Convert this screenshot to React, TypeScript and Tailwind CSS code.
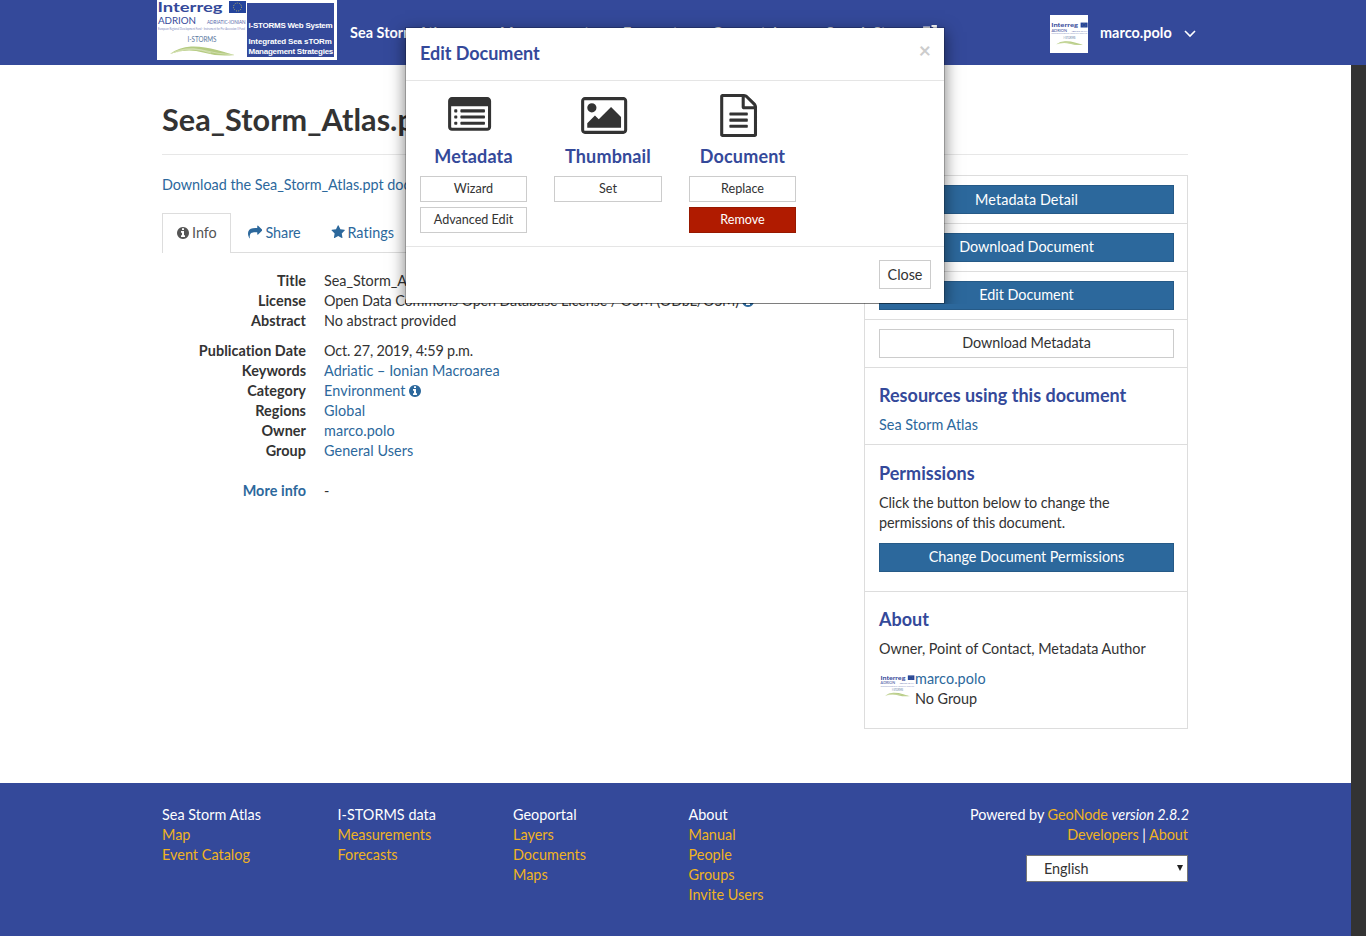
import React from "react";

const FILE =
  "M1596 380q28 28 48 76t20 88v1152q0 40-28 68t-68 28h-1344q-40 0-68-28t-28-68v-1600q0-40 28-68t68-28h896q40 0 88 20t76 48zm-444-244v376h376q-10-29-22-41l-313-313q-12-12-41-22zm384 1528v-1024h-416q-40 0-68-28t-28-68v-416h-768v1536h1280zm-1024-864q0-14 9-23t23-9h704q14 0 23 9t9 23v64q0 14-9 23t-23 9h-704q-14 0-23-9t-9-23v-64zm736 224q14 0 23 9t9 23v64q0 14-9 23t-23 9h-704q-14 0-23-9t-9-23v-64q0-14 9-23t23-9h704zm0 256q14 0 23 9t9 23v64q0 14-9 23t-23 9h-704q-14 0-23-9t-9-23v-64q0-14 9-23t23-9h704z";
const PICTURE =
  "M640 576q0 80-56 136t-136 56-136-56-56-136 56-136 136-56 136 56 56 136zm1024 384v448h-1408v-192l320-320 160 160 512-512zm96-704h-1600q-13 0-22.5 9.5t-9.5 22.5v1216q0 13 9.5 22.5t22.5 9.5h1600q13 0 22.5-9.5t9.5-22.5v-1216q0-13-9.5-22.5t-22.5-9.5zm160 32v1216q0 66-47 113t-113 47h-1600q-66 0-113-47t-47-113v-1216q0-66 47-113t113-47h1600q66 0 113 47t47 113z";
const INFO =
  "M1152 1376v-160q0-14-9-23t-23-9h-96v-512q0-14-9-23t-23-9h-320q-14 0-23 9t-9 23v160q0 14 9 23t23 9h96v320h-96q-14 0-23 9t-9 23v160q0 14 9 23t23 9h448q14 0 23-9t9-23zm-128-896v-160q0-14-9-23t-23-9h-192q-14 0-23 9t-9 23v160q0 14 9 23t23 9h192q14 0 23-9t9-23zm640 416q0 209-103 385.5t-279.5 279.5-385.5 103-385.5-103-279.5-279.5-103-385.5 103-385.5 279.5-279.5 385.5-103 385.5 103 279.5 279.5 103 385.5z";
const SHARE =
  "M1792 640q0 26-19 45l-512 512q-19 19-45 19t-45-19-19-45v-256h-224q-98 0-175.5 6t-154 21.5-133 42.5-105.5 69.5-80 101-48.5 138.5-17.5 181q0 55 5 123 0 6 2.5 23.5t2.5 26.5q0 15-8.5 25t-23.5 10q-16 0-28-17-7-9-13-22t-13.5-30-10.5-24q-127-285-127-451 0-199 53-333 162-403 875-403h224v-256q0-26 19-45t45-19 45 19l512 512q19 19 19 45z";
const STAR =
  "M1728 647q0 22-26 48l-363 354 86 500q1 7 1 20 0 21-10.5 35.5t-30.5 14.5q-19 0-40-12l-449-236-449 236q-22 12-40 12-21 0-31.5-14.5t-10.5-35.5q0-6 2-20l86-500-364-354q-25-27-25-48 0-37 56-46l502-73 225-455q19-41 49-41t49 41l225 455 502 73q56 9 56 46z";
const LIST =
  "M160 128h1472q66 0 113 47t47 113v1088q0 66-47 113t-113 47h-1472q-66 0-113-47t-47-113v-1088q0-66 47-113t113-47zM128 512v864q0 32 32 32h1472q32 0 32-32v-864zM288 640h64q32 0 32 32v64q0 32-32 32h-64q-32 0-32-32v-64q0-32 32-32zM288 896h64q32 0 32 32v64q0 32-32 32h-64q-32 0-32-32v-64q0-32 32-32zM288 1152h64q32 0 32 32v64q0 32-32 32h-64q-32 0-32-32v-64q0-32 32-32zM544 640h960q32 0 32 32v64q0 32-32 32h-960q-32 0-32-32v-64q0-32 32-32zM544 896h960q32 0 32 32v64q0 32-32 32h-960q-32 0-32-32v-64q0-32 32-32zM544 1152h960q32 0 32 32v64q0 32-32 32h-960q-32 0-32-32v-64q0-32 32-32z";

function Icon({ d, box = "0 0 1792 1792", className }: { d: string; box?: string; className: string }) {
  return (
    <svg viewBox={box} className={className} fill="currentColor" fillRule="evenodd">
      <path d={d} />
    </svg>
  );
}

function InterregLogo({ className }: { className: string }) {
  return (
    <svg viewBox="0 0 90 60" className={className} fontFamily="Lato, sans-serif">
      <text x="0.5" y="12.200" fontSize="14" fontWeight="700" fill="#34499a" textLength="65" lengthAdjust="spacingAndGlyphs">Interreg</text>
      <rect x="72" y="1" width="17" height="12" fill="#24449c" />
      <circle cx="80.500" cy="7" r="4" fill="none" stroke="#b7b05c" strokeWidth="1" strokeDasharray="1 1.200" />
      <text x="1" y="24" fontSize="9.500" fill="#34499a" textLength="38" lengthAdjust="spacingAndGlyphs">ADRION</text>
      <text x="50" y="24" fontSize="5.200" fill="#5566a8" textLength="38.500" lengthAdjust="spacingAndGlyphs">ADRIATIC-IONIAN</text>
      <text x="1" y="30" fontSize="3" fill="#7f8bbd" textLength="87" lengthAdjust="spacingAndGlyphs">European Regional Development Fund - Instrument for Pre-Accession II Fund</text>
      <text x="30.500" y="41.500" fontSize="7.500" fill="#5b78a0" textLength="29" lengthAdjust="spacingAndGlyphs">I-STORMS</text>
      <path d="M13 54Q22 47 34 46.500T60 50T77 55Q62 57 46 52.500T13 54Z" fill="#b5cb82" />
      <path d="M14 53.500Q29 46 45 50T77 55M20 52Q35 46 54 53" fill="none" stroke="#dbe5bd" strokeWidth="0.700" />
    </svg>
  );
}

function Chevron({ className }: { className: string }) {
  return (
    <svg viewBox="0 0 12 8" className={className} fill="none" stroke="currentColor" strokeWidth="1.600">
      <path d="M1 1l5 5 5-5" />
    </svg>
  );
}

const heading = "text-[18px] leading-[20px] font-bold tracking-[0.01px] text-[#34499a]";
const toolHeading = "mt-[9px] mb-[10px] text-[18px] leading-[20px] font-bold tracking-[0.15px] text-[#34499a]";
const blueBtn =
  "flex h-[29px] w-full items-center justify-center border border-[#265a87] bg-[#2c689c] pb-[2px] text-white";
const smallBtn =
  "flex h-[26px] w-full items-center justify-center border text-[12.6px] tracking-[-0.01px]";

function Row({ label, children, className = "" }: { label: string; children: React.ReactNode; className?: string }) {
  return (
    <div className={"flex h-5 gap-[18px] " + className}>
      <dt className="w-36 text-right font-bold tracking-[0.05px]">{label}</dt>
      <dd className="flex items-center whitespace-nowrap">{children}</dd>
    </div>
  );
}

function FooterCol({ title, links }: { title: string; links: string[] }) {
  return (
    <div className="w-[175.5px] tracking-[0.03px]">
      <div className="text-white">{title}</div>
      {links.map((l) => (
        <div key={l}>{l}</div>
      ))}
    </div>
  );
}

export default function App() {
  return (
    <div className="relative flex h-[936px] w-[1366px] flex-col overflow-hidden bg-white font-['Lato','Carlito',sans-serif] text-[14.4px] leading-5 tracking-[-0.03px] text-[#333]">
      <header className="flex h-[65px] shrink-0 bg-[#34499a] pl-[157px] text-white">
        <div className="flex h-[60px] w-[180px] bg-white">
          <InterregLogo className="h-[60px] w-[90px]" />
          <div className="mt-[3px] h-[54px] w-[87px] bg-[#34499a] pt-[18px] pl-[1.500px] font-['Liberation_Sans',Arial,sans-serif] text-[8px] leading-[10px] font-bold tracking-[-0.25px] whitespace-nowrap">
            <div>I-STORMS Web System</div>
            <div className="mt-[6px] tracking-[-0.12px]">Integrated Sea sTORm</div>
            <div>Management Strategies</div>
          </div>
        </div>
        <nav className="flex h-[65px] w-[713px] items-center pl-[13px] font-bold tracking-[0.05px] whitespace-nowrap">
          <div className="flex w-[150px] items-center gap-3">Sea Storm Atlas <Chevron className="w-3" /></div>
          <div className="w-[123px]">Measurements</div>
          <div className="w-[89px]">Forecasts</div>
          <div className="w-[114px]">Geoportal</div>
          <div className="w-[97px]">Search Store</div>
          <svg viewBox="0 0 14 14" className="mt-[-1px] h-[14px] w-[14px]" fill="none" stroke="currentColor" strokeWidth="1.800">
            <path d="M7 2.500H1V13h10V8M8.500 1H13v4.500M13 1L6 8" />
          </svg>
        </nav>
        <div className="flex h-[65px] items-center pt-[3px]">
          <div className="flex h-[38px] w-[38px] items-center justify-center bg-white">
            <InterregLogo className="h-[25px] w-[37px]" />
          </div>
          <span className="-mt-[3px] ml-3 w-[72px] font-bold tracking-[0.05px]">marco.polo</span>
          <Chevron className="-mt-[1px] ml-3 w-3" />
        </div>
      </header>

      <div className="flex min-h-0 flex-1">
        <div className="flex w-[1351px] flex-col">
          <div className="h-[718px] pr-[163px] pl-[162px]">
            <h1 className="h-[90px] border-b border-[#e7e7e7] pt-[37px] text-[30.6px] leading-[36px] font-bold tracking-[0.05px]">
              Sea_Storm_Atlas.ppt
            </h1>
            <div className="flex justify-between">
              <main className="w-[680px] pt-5">
                <div className="text-[#2c689c]">Download the Sea_Storm_Atlas.ppt document.</div>
                <div className="mt-[18px] flex h-10 items-center border-b border-[#ddd] text-[#2c689c]">
                  <div className="-mb-px flex h-10 w-[69px] items-center gap-[3px] border border-b-0 border-[#ddd] bg-white pb-[2px] pl-[14px] text-[#555]">
                    <Icon d={INFO} box="128 128 1536 1536" className="h-3 w-3" />
                    Info
                  </div>
                  <div className="ml-[17px] flex w-[83px] items-center gap-[3px]">
                    <Icon d={SHARE} className="h-[14.4px] w-[14.4px]" />
                    Share
                  </div>
                  <div className="flex items-center gap-[2px] tracking-[0.06px]">
                    <Icon d={STAR} className="h-[14.4px] w-[14.4px]" />
                    Ratings
                  </div>
                </div>
                <dl className="mt-[18px]">
                  <Row label="Title">Sea_Storm_Atlas.ppt</Row>
                  <Row label="License">
                    <span className="tracking-[-0.14px]">Open Data Commons Open Database License / OSM (ODbL/OSM)</span>
                    <Icon d={INFO} box="128 128 1536 1536" className="ml-[3px] h-3 w-3 text-[#2c689c]" />
                  </Row>
                  <Row label="Abstract">No abstract provided</Row>
                  <Row label="Publication Date" className="mt-[10px]">
                    <span className="tracking-[-0.19px]">Oct. 27, 2019, 4:59 p.m.</span>
                  </Row>
                  <Row label="Keywords"><span className="tracking-[0.06px] text-[#2c689c]">Adriatic – Ionian Macroarea</span></Row>
                  <Row label="Category">
                    <span className="tracking-[0.1px] text-[#2c689c]">Environment</span>
                    <Icon d={INFO} box="128 128 1536 1536" className="ml-[3px] h-3 w-3 text-[#2c689c]" />
                  </Row>
                  <Row label="Regions"><span className="tracking-[0.1px] text-[#2c689c]">Global</span></Row>
                  <Row label="Owner"><span className="tracking-[0.08px] text-[#2c689c]">marco.polo</span></Row>
                  <Row label="Group"><span className="tracking-[0.06px] text-[#2c689c]">General Users</span></Row>
                  <div className="mt-5 flex gap-[18px]">
                    <dt className="w-36 text-right font-bold tracking-[0.05px] text-[#2c689c]">More info</dt>
                    <dd>-</dd>
                  </div>
                </dl>
              </main>

              <aside className="mt-5 h-[554px] w-[324px] divide-y divide-[#ddd] border border-[#ddd]">
                <div className="h-12 pt-[9px] pr-[13px] pl-[14px]">
                  <button className="flex h-[29px] w-full items-center justify-center border border-[#265a87] bg-[#2c689c] tracking-[0.08px] text-white">Metadata Detail</button>
                </div>
                <div className="h-12 pt-[9px] pr-[13px] pl-[14px]"><button className={blueBtn}>Download Document</button></div>
                <div className="h-12 pt-[9px] pr-[13px] pl-[14px]"><button className={blueBtn}>Edit Document</button></div>
                <div className="h-12 pt-[9px] pr-[13px] pl-[14px]">
                  <button className="flex h-[29px] w-full items-center justify-center border border-[#ccc] bg-white pb-[2px]">Download Metadata</button>
                </div>
                <div className="h-[77px] px-[14px] pt-[17px]">
                  <h4 className={heading}>Resources using this document</h4>
                  <div className="mt-[10px] tracking-[0.03px] text-[#2c689c]">Sea Storm Atlas</div>
                </div>
                <div className="h-[147px] pt-[18px] pr-[13px] pl-[14px]">
                  <h4 className={heading}>Permissions</h4>
                  <p className="mt-[10px] mb-[10px] tracking-[-0.08px]">
                    Click the button below to change the
                    <br />
                    permissions of this document.
                  </p>
                  <button className={blueBtn}>Change Document Permissions</button>
                </div>
                <div className="px-[14px] pt-[17px]">
                  <h4 className={heading}>About</h4>
                  <div className="mt-[10px] whitespace-nowrap">Owner, Point of Contact, Metadata Author</div>
                  <div className="mt-[10px] flex">
                    <div className="flex h-[35px] w-9 items-center justify-center pl-px">
                      <InterregLogo className="h-[23px] w-[35px]" />
                    </div>
                    <div>
                      <div className="tracking-[0.06px] text-[#2c689c]">marco.polo</div>
                      <div>No Group</div>
                    </div>
                  </div>
                </div>
              </aside>
            </div>
          </div>

          <footer className="flex flex-1 bg-[#34499a] pt-[22px] pr-[163px] pl-[162px] text-[#f0b323]">
            <FooterCol title="Sea Storm Atlas" links={["Map", "Event Catalog"]} />
            <FooterCol title="I-STORMS data" links={["Measurements", "Forecasts"]} />
            <FooterCol title="Geoportal" links={["Layers", "Documents", "Maps"]} />
            <FooterCol title="About" links={["Manual", "People", "Groups", "Invite Users"]} />
            <div className="flex flex-1 flex-col items-end">
              <div className="-mr-px"><span className="text-white">Powered by</span> GeoNode <em className="text-white">version 2.8.2</em></div>
              <div>Developers <span className="text-white">|</span> About</div>
              <div className="mt-[10px] flex h-[27px] w-[162px] items-center justify-between border border-[#767676] bg-white pr-[4px] pl-[17px] text-[#333]">
                English
                <svg viewBox="0 0 6 6" className="-mt-[2px] h-[6px] w-[6px]" fill="#222"><path d="M0 0h6L3 6z" /></svg>
              </div>
            </div>
          </footer>
        </div>
        <div className="w-[15px] bg-[#333]" />
      </div>

      <div className="absolute inset-x-0 top-0 flex h-[304px] justify-center overflow-hidden pr-[16px] pt-[27px]">
        <section role="dialog" className="flex h-[277px] w-[540px] flex-col border border-black/20 bg-white bg-clip-padding shadow-[0_5px_15px_rgba(0,0,0,0.5)]">
          <div className="flex h-[53px] justify-between border-b border-[#e5e5e5] pr-[13px] pl-[14px]">
            <h4 className="pt-[15px] text-[18px] leading-[20px] font-bold text-[#34499a]">Edit Document</h4>
            <button className="h-6 pt-[11px] text-[21px] leading-[21px] font-bold tracking-normal text-[#ccc]">×</button>
          </div>
          <div className="flex h-[166px] gap-[27px] border-b border-[#e5e5e5] px-[14px] pt-[13px]">
            <div className="flex w-[107px] flex-col items-center">
              <Icon d={LIST} className="mr-[7px] h-[43px] w-[43.2px]" />
              <h4 className={toolHeading}>Metadata</h4>
              <button className={smallBtn + " mb-[5px] border-[#ccc]"}>Wizard</button>
              <button className={smallBtn + " border-[#ccc] pb-px"}>Advanced Edit</button>
            </div>
            <div className="flex w-[108px] flex-col items-center">
              <Icon d={PICTURE} box="0 0 1920 1792" className="mr-[7px] h-[43px] w-[46.3px]" />
              <h4 className={toolHeading}>Thumbnail</h4>
              <button className={smallBtn + " border-[#ccc]"}>Set</button>
            </div>
            <div className="flex w-[107px] flex-col items-center">
              <Icon d={FILE} className="mr-[7px] h-[43px] w-[43.2px]" />
              <h4 className={toolHeading}>Document</h4>
              <button className={smallBtn + " mb-[5px] border-[#ccc]"}>Replace</button>
              <button className={smallBtn + " border-[#971800] bg-[#b01b00] pb-px text-white"}>Remove</button>
            </div>
          </div>
          <div className="flex justify-end pt-[13px] pr-[13px]">
            <button className="h-[29px] w-[52px] border border-[#ccc]">Close</button>
          </div>
        </section>
      </div>
    </div>
  );
}
